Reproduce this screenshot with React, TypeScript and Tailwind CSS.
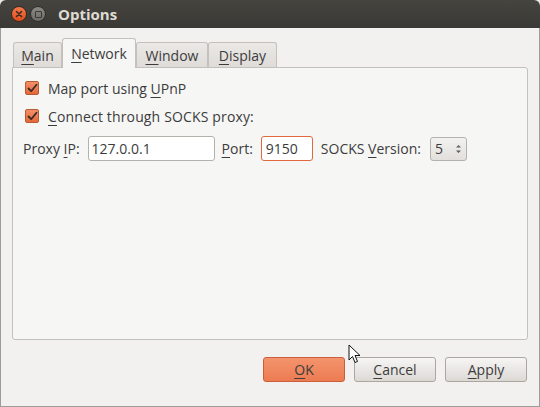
import React from 'react';

const font = { fontFamily: '"Open Sans", "Noto Sans", "DejaVu Sans", sans-serif' };

// Underlined mnemonic letter
const U: React.FC<{ children: React.ReactNode }> = ({ children }) => (
    <span className="underline underline-offset-[3px] decoration-1">{children}</span>
);

const Check: React.FC = () => (
    <span className="w-[14px] h-[14px] rounded-[2px] border border-[#b65a2f] bg-gradient-to-b from-[#f4906a] to-[#e5683a] flex items-center justify-center shrink-0">
        <svg width="11" height="11" viewBox="0 0 11 11">
            <path d="M1.5 5.5 L4.2 8.2 L9.5 1.8" stroke="#3b2a22" strokeWidth="1.8" fill="none" strokeLinecap="round" strokeLinejoin="round" />
        </svg>
    </span>
);

const Tab: React.FC<{ active?: boolean; children: React.ReactNode; w: string }> = ({ active, children, w }) =>
    active ? (
        <div className={`${w} h-[30px] -mb-px z-10 bg-[#f6f6f5] border border-[#c4c1bd] border-b-0 rounded-t-[3px] flex items-center justify-center`}>
            {children}
        </div>
    ) : (
        <div className={`${w} h-[25px] bg-gradient-to-b from-[#ebe9e6] to-[#dedbd8] border border-[#c4c1bd] border-b-0 rounded-t-[3px] flex items-center justify-center`}>
            {children}
        </div>
    );

const Button: React.FC<{ primary?: boolean; children: React.ReactNode }> = ({ primary, children }) => (
    <div
        className={`w-[82px] h-[25px] rounded-[3px] border flex items-center justify-center text-[14px] ${
            primary
                ? 'border-[#c9603a] bg-gradient-to-b from-[#f4946e] to-[#ec7b51] text-[#3c3c3c]'
                : 'border-[#aaa7a3] bg-gradient-to-b from-[#f7f6f5] to-[#dcd9d5] text-[#3c3c3c]'
        }`}
    >
        {children}
    </div>
);

const App: React.FC = () => {
    return (
        <div className="w-[540px] h-[407px] bg-[#e9e8e6] relative overflow-hidden text-[#3c3c3c]" style={font}>
            <div className="w-[540px] h-[407px] flex flex-col">
                {/* Title bar */}
                <div className="h-[28px] bg-gradient-to-b from-[#45443f] to-[#3a3935] rounded-t-[6px] flex items-center pl-[11px] gap-[3px] shrink-0">
                    <span className="w-[16px] h-[16px] rounded-full bg-gradient-to-b from-[#f6794b] to-[#df4b17] border border-[#3a2a22] flex items-center justify-center">
                        <svg width="8" height="8" viewBox="0 0 8 8">
                            <path d="M1.5 1.5 L6.5 6.5 M6.5 1.5 L1.5 6.5" stroke="#3b2a22" strokeWidth="1.6" strokeLinecap="round" />
                        </svg>
                    </span>
                    <span className="w-[16px] h-[16px] rounded-full bg-gradient-to-b from-[#8a8984] to-[#6c6b66] border border-[#2e2d2a] flex items-center justify-center">
                        <span className="w-[7px] h-[7px] border-[1.5px] border-[#3a3935] rounded-[1px]" />
                    </span>
                    <span className="ml-[9px] text-[15px] font-bold text-[#dfdbd2]">Options</span>
                </div>

                {/* Body */}
                <div className="flex-1 bg-[#f2f1f0] border-x border-b border-[#9e9c98] flex flex-col px-[11px] pt-[10px]">
                    {/* Tabs */}
                    <div className="flex items-end pl-[1px] text-[14px]">
                        <Tab w="w-[49px]"><span><U>M</U>ain</span></Tab>
                        <Tab active w="w-[74px]"><span><U>N</U>etwork</span></Tab>
                        <Tab w="w-[72px]"><span><U>W</U>indow</span></Tab>
                        <Tab w="w-[69px]"><span><U>D</U>isplay</span></Tab>
                    </div>
                    {/* Panel */}
                    <div className="h-[273px] bg-[#f6f6f5] border border-[#c4c1bd] rounded-b-[3px] rounded-tr-[3px] flex flex-col pl-[12px] pt-[13px] text-[14px]">
                        <div className="flex items-center gap-[9px] h-[14px]">
                            <Check />
                            <span>Map port using <U>U</U>PnP</span>
                        </div>
                        <div className="flex items-center gap-[9px] h-[14px] mt-[14px]">
                            <Check />
                            <span className="tracking-[0.15px]"><U>C</U>onnect through SOCKS proxy:</span>
                        </div>
                        <div className="flex items-center mt-[13px] -ml-[2px]">
                            <span>Proxy <U>I</U>P:</span>
                            <div className="ml-[8px] w-[127px] h-[25px] bg-white border border-[#b5b2ad] rounded-[3px] flex items-center px-[3px]">
                                127.0.0.1
                            </div>
                            <span className="ml-[7px]"><U>P</U>ort:</span>
                            <div className="ml-[8px] w-[52px] h-[25px] bg-white border border-[#e0693e] rounded-[3px] flex items-center px-[4px]">
                                9150
                            </div>
                            <span className="ml-[8px]">SOCKS <U>V</U>ersion:</span>
                            <div className="ml-[9px] w-[37px] h-[24px] bg-gradient-to-b from-[#f3f2f0] to-[#e2dfdc] border border-[#b5b2ad] rounded-[3px] flex items-center justify-between pl-[4px] pr-[4px]">
                                <span>5</span>
                                <svg width="7" height="12" viewBox="0 0 7 12">
                                    <path d="M1 4.5 L3.5 2 L6 4.5 Z M1 7.5 L3.5 10 L6 7.5 Z" fill="#5e5c58" />
                                </svg>
                            </div>
                        </div>
                    </div>

                    {/* Buttons */}
                    <div className="flex justify-end gap-[9px] mt-[17px] pr-[1px]">
                        <Button primary><span><U>O</U>K</span></Button>
                        <Button><span><U>C</U>ancel</span></Button>
                        <Button><span><U>A</U>pply</span></Button>
                    </div>
                </div>
            </div>

            {/* Mouse pointer */}
            <svg className="absolute left-[348px] top-[344px]" width="14" height="20" viewBox="0 0 14 20">
                <path d="M1 1 L1 16 L4.5 12.5 L7 18.5 L9.5 17.5 L7 11.5 L12 11.5 Z" fill="#ffffff" stroke="#111111" strokeWidth="1" strokeLinejoin="round" />
            </svg>
        </div>
    );
};

export default App;
